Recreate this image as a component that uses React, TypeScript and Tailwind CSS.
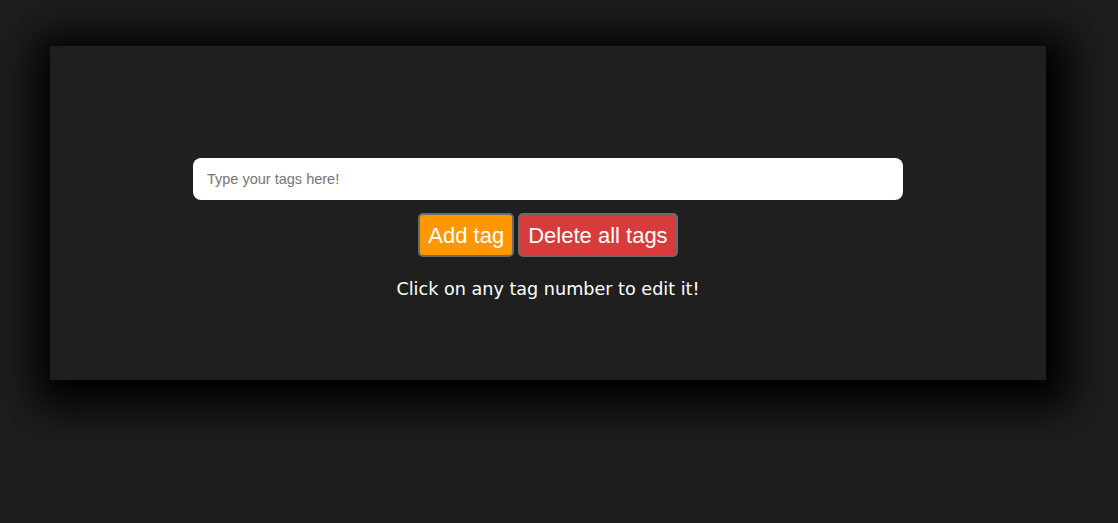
export default function App() {
  return (
    <div className="min-h-[523px] w-full bg-[#1e1e1e] pt-[46px] pl-[50px]">
      <div className="flex h-[334px] w-[996px] flex-col items-center bg-[#1f1f1f] pt-[112px] shadow-[5px_8px_40px_20px_#000]">
        <input
          type="text"
          placeholder="Type your tags here!"
          className="h-[42px] w-[710px] rounded-[8px] bg-white px-[14px] text-[14.5px] text-black outline-none placeholder:text-[#757575] [font-family:Arial,'Liberation_Sans',sans-serif]"
        />
        <div className="mt-[13px] flex gap-[4px]">
          <button className="h-[44px] rounded-[5px] border-2 border-[#6b6b6b] bg-[#ff9800] px-[8px] text-[22px] text-white [font-family:Arial,'Liberation_Sans',sans-serif]">
            Add tag
          </button>
          <button className="h-[44px] rounded-[5px] border-2 border-[#6b6b6b] bg-[#d63c3c] px-[8px] text-[22px] text-white [font-family:Arial,'Liberation_Sans',sans-serif]">
            Delete all tags
          </button>
        </div>
        <p className="mt-[19px] text-[17.6px] leading-[26px] text-white [font-family:'DejaVu_Sans',Verdana,sans-serif]">
          Click on any tag number to edit it!
        </p>
      </div>
    </div>
  );
}
